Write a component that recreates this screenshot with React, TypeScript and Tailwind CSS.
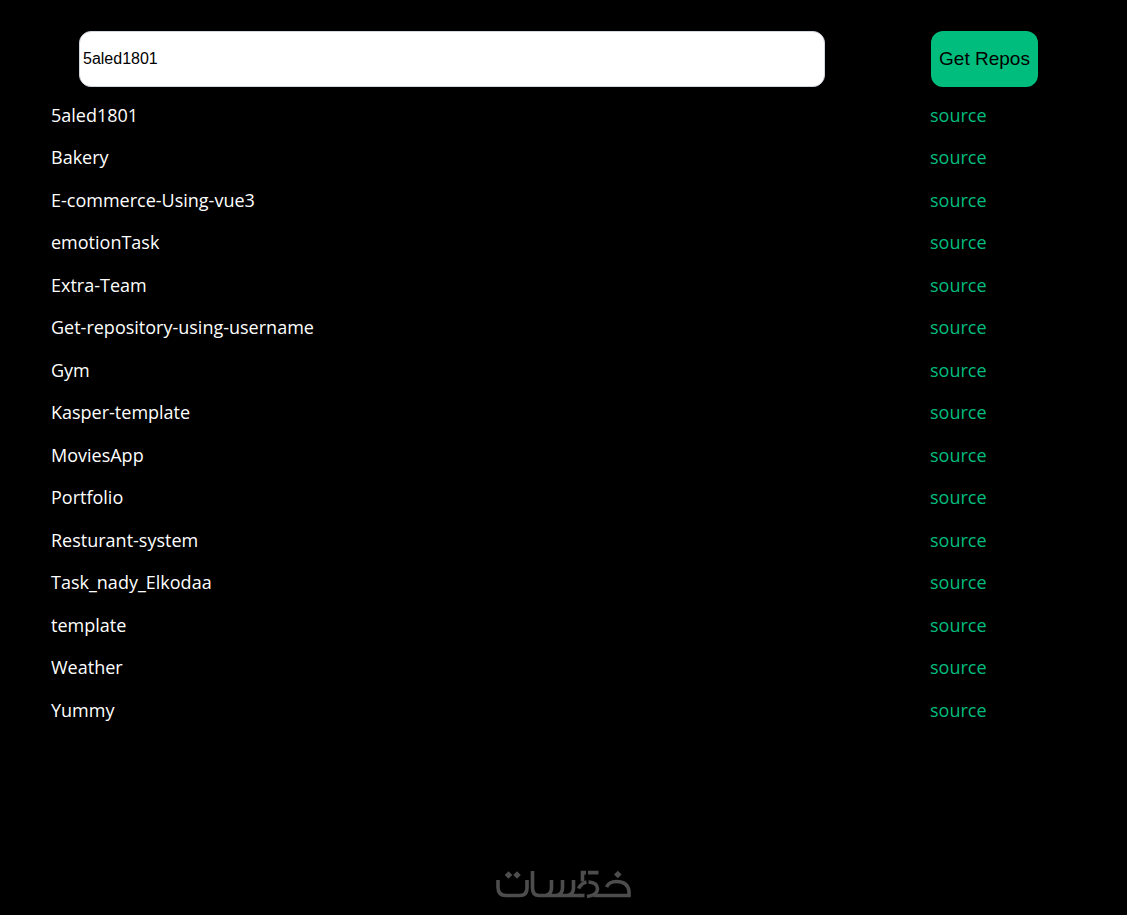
import { useState } from 'react'

const USERNAME = '5aled1801'

const REPOS = [
  '5aled1801',
  'Bakery',
  'E-commerce-Using-vue3',
  'emotionTask',
  'Extra-Team',
  'Get-repository-using-username',
  'Gym',
  'Kasper-template',
  'MoviesApp',
  'Portfolio',
  'Resturant-system',
  'Task_nady_Elkodaa',
  'template',
  'Weather',
  'Yummy',
]

function Logo() {
  return (
    <svg
      role="img"
      aria-label="خمسات"
      viewBox="0 0 136 30"
      className="h-[30px] w-[136px]"
      fill="none"
      stroke="#4d4d4d"
      strokeWidth="3.6"
    >
      <path d="M2 11V18Q2 26.500 10 26.500H24Q31 26.500 31 19V11" />
      <path d="M36.500 2V19Q36.500 26.500 43 26.500H84" />
      <path d="M55.500 11V19Q55.500 25 50 26.500M66.500 11V19Q66.500 25 61 26.500M77.500 11V19Q77.500 25 72 26.500" />
      <path d="M86.500 12.500V3.600H90M92 3.600H102.500" />
      <path d="M82.500 19.500Q85.500 14 90.500 13M92.500 13Q101.500 13.500 101.500 20Q101.500 26 91 27.500M83 26.500H88.500" />
      <path d="M97.500 26.500H133V22Q131.500 12.500 120.500 12.500Q113 12.500 110.500 18" />
      <g fill="#4d4d4d" stroke="none">
        <path d="M12.500 2.200l3.800 3.800-3.800 3.800-3.800-3.800z" />
        <path d="M21 2.200l3.800 3.800-3.800 3.800-3.800-3.800z" />
        <path d="M121.800 1.700l3.800 3.800-3.800 3.800-3.800-3.800z" />
      </g>
    </svg>
  )
}

export default function App() {
  const [username, setUsername] = useState(USERNAME)
  const [repos, setRepos] = useState(REPOS)

  function handleSubmit(e: React.FormEvent) {
    e.preventDefault()
    setRepos(username.trim() === USERNAME ? REPOS : [])
  }

  return (
    <div className="flex min-h-screen flex-col bg-black px-[51px] pt-[31px] pb-4 font-['Open_Sans','Noto_Sans',sans-serif] text-white">
      <form
        onSubmit={handleSubmit}
        className="flex items-center justify-between pr-[38px] pl-7 font-['Liberation_Sans',Arial,sans-serif] text-black"
      >
        <input
          type="text"
          aria-label="GitHub username"
          value={username}
          onChange={(e) => setUsername(e.target.value)}
          className="h-14 w-7/9 rounded-xl border border-gray-300 bg-white px-[3px] text-base"
        />
        <button type="submit" className="h-14 w-[107px] rounded-xl bg-[#00bd7e] text-[19px]">
          Get Repos
        </button>
      </form>

      <ul className="mt-[7px] text-lg">
        {repos.map((repo) => (
          <li
            key={repo}
            className="flex items-start justify-between pt-[7px] odd:h-[42px] even:h-[43px]"
          >
            <span>{repo}</span>
            <a
              href={`https://github.com/${USERNAME}/${repo}`}
              className="mr-[38px] w-[108px] text-[#00bd7e]"
            >
              source
            </a>
          </li>
        ))}
      </ul>

      <footer className="mt-auto flex justify-center">
        <Logo />
      </footer>
    </div>
  )
}
